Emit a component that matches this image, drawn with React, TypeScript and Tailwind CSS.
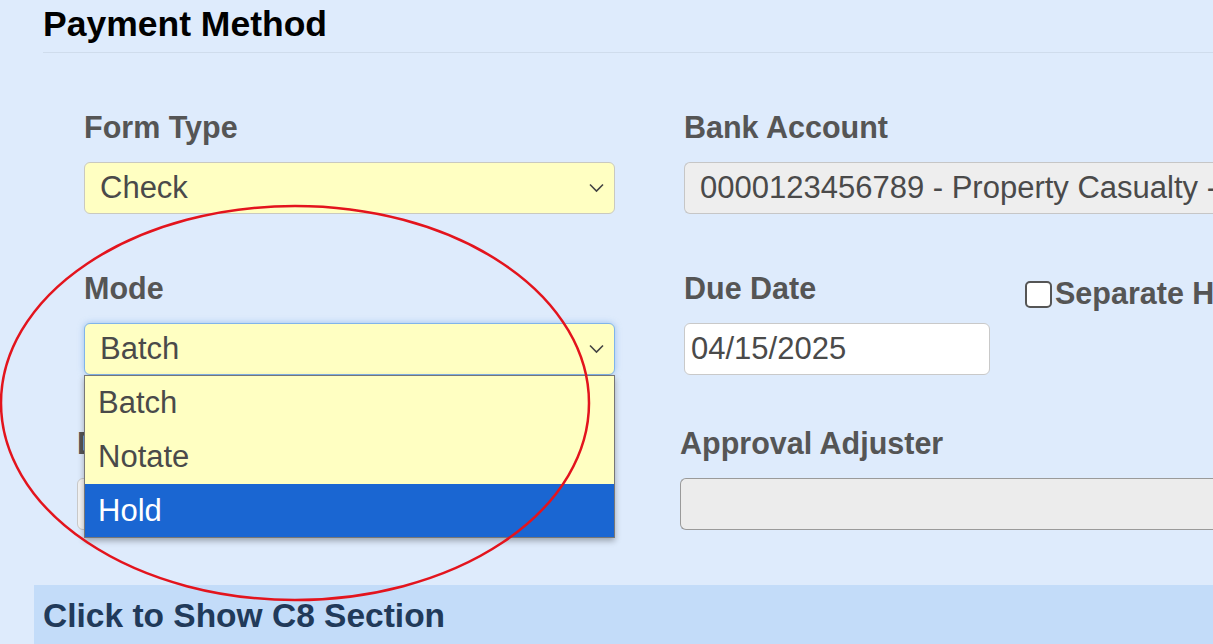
import React from 'react'

function Chevron() {
  return (
    <svg className="absolute right-[10px] top-1/2 -translate-y-1/2" width="15" height="9" viewBox="0 0 15 9" fill="none">
      <polyline points="1,1 7.5,7.5 14,1" stroke="#444" strokeWidth="1.6" />
    </svg>
  )
}

function Label({ children }: { children: React.ReactNode }) {
  return <div className="h-[34px] leading-[34px] text-[30.5px] font-bold text-[#555] whitespace-nowrap">{children}</div>
}

export default function App() {
  return (
    <div className="relative min-h-[644px] w-full overflow-hidden bg-[#deebfc] font-['Liberation_Sans',Arial,sans-serif]">
      {/* Section title */}
      <div className="pl-[43px]">
        <h2 className="pt-[4px] pb-[8px] text-[35.5px] leading-[40px] font-bold text-black border-b border-[#cfdcec]">
          Payment Method
        </h2>
      </div>

      {/* Form */}
      <div className="pl-[84px] pt-[57px]">
        {/* Row 1 */}
        <div className="grid grid-cols-[531px_1fr] gap-x-[69px]">
          <div>
            <Label>Form Type</Label>
            <div className="relative mt-[18px] h-[52px] rounded-[6px] border border-[#c9c9c0] bg-[#ffffc2] pl-[15px] leading-[50px] text-[31px] text-[#4a4a4a]">
              Check
              <Chevron />
            </div>
          </div>
          <div>
            <Label>Bank Account</Label>
            <div className="mt-[18px] h-[52px] rounded-l-[6px] border border-r-0 border-[#c6c6c6] bg-[#eeeeee] pl-[15px] leading-[50px] text-[31px] text-[#4a4a4a] whitespace-nowrap overflow-hidden">
              0000123456789 - Property Casualty - Operating
            </div>
          </div>
        </div>

        {/* Row 2 */}
        <div className="mt-[57px] grid grid-cols-[531px_1fr] gap-x-[69px]">
          <div>
            <Label>Mode</Label>
            <div className="relative mt-[18px]">
              <div className="relative h-[52px] rounded-[6px] border border-[#80b4ea] bg-[#ffffc2] pl-[15px] leading-[50px] text-[31px] text-[#4a4a4a] shadow-[0_0_6px_rgba(102,160,230,0.55)]">
                Batch
                <Chevron />
              </div>
              {/* Open dropdown */}
              <div className="absolute left-0 top-full z-10 w-full border border-[#777] bg-[#ffffc2] text-[31px] text-[#4a4a4a] shadow-[0_3px_6px_rgba(0,0,0,0.3)]">
                <div className="h-[54px] pl-[13px] leading-[54px]">Batch</div>
                <div className="h-[54px] pl-[13px] leading-[54px]">Notate</div>
                <div className="h-[53px] pl-[13px] leading-[53px] bg-[#1a66d2] text-white">Hold</div>
              </div>
            </div>
          </div>
          <div className="flex items-start">
            <div className="w-[306px]">
              <Label>Due Date</Label>
              <div className="mt-[18px] h-[52px] rounded-[6px] border border-[#c9c9c9] bg-white pl-[6px] leading-[50px] text-[31px] text-[#4a4a4a]">
                04/15/2025
              </div>
            </div>
            <div className="ml-[35px] mt-[6px] flex h-[34px] items-center whitespace-nowrap">
              <span className="h-[27px] w-[27px] shrink-0 rounded-[5px] border-2 border-[#555] bg-white" />
              <span className="ml-[3px] text-[30.5px] font-bold text-[#555]">Separate Handling</span>
            </div>
          </div>
        </div>

        {/* Row 3 */}
        <div className="-ml-[7px] mt-[51px] grid grid-cols-[531px_1fr] gap-x-[72px]">
          <div>
            <Label>Delivery</Label>
            <div className="mt-[18px] h-[52px] rounded-[6px] border border-[#c9c9c9] bg-[#f3f3f3]" />
          </div>
          <div>
            <Label>Approval Adjuster</Label>
            <div className="mt-[18px] h-[52px] rounded-l-[6px] border border-r-0 border-[#9a9a9a] bg-[#ececec]" />
          </div>
        </div>
      </div>

      {/* Collapsed section bar */}
      <div className="ml-[34px] mt-[55px] h-[64px] bg-[#c3dcf9] pl-[9px] pt-[12px]">
        <div className="text-[33.5px] leading-[38px] font-bold text-[#213a5a]">Click to Show C8 Section</div>
      </div>

      {/* Red annotation ellipse */}
      <svg className="pointer-events-none absolute left-0 top-0 z-20" width="1213" height="644" viewBox="0 0 1213 644">
        <ellipse cx="295" cy="403" rx="294" ry="197" fill="none" stroke="#e3141d" strokeWidth="2.5" />
      </svg>
    </div>
  )
}
